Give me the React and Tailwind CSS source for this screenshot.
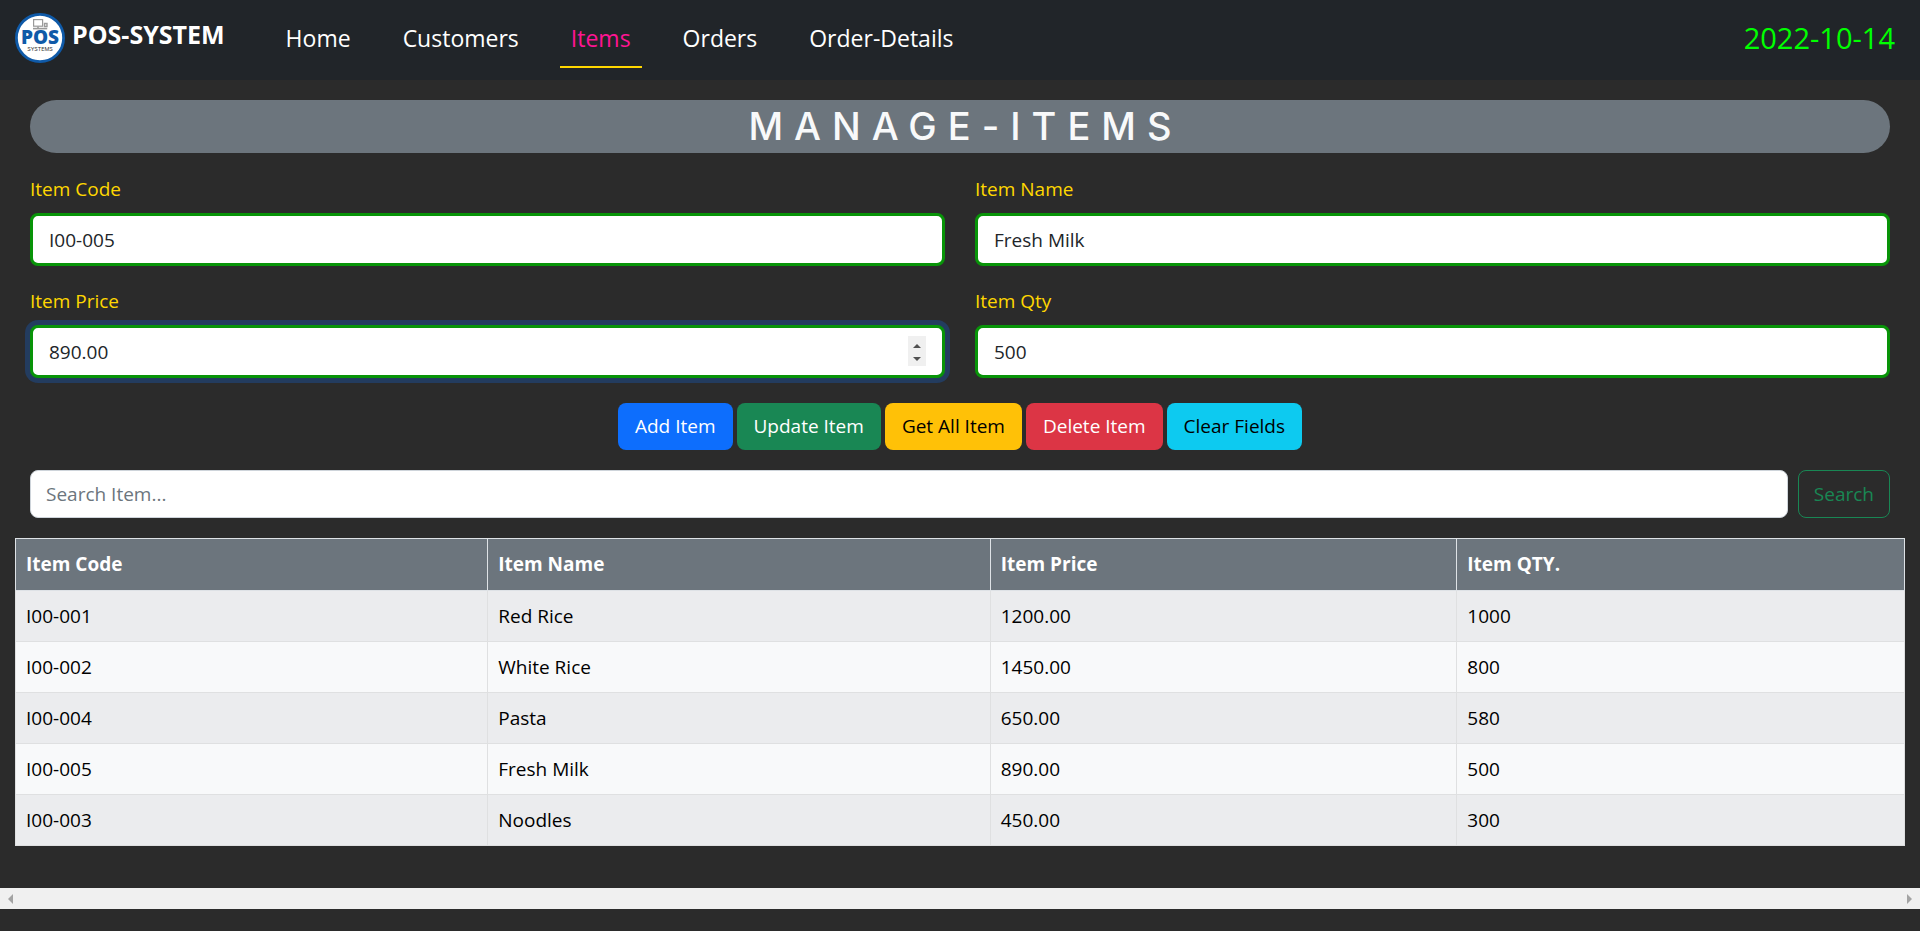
import React, { useState } from "react";

const links = ["Home", "Customers", "Items", "Orders", "Order-Details"];

const rows = [
  ["I00-001", "Red Rice", "1200.00", "1000"],
  ["I00-002", "White Rice", "1450.00", "800"],
  ["I00-004", "Pasta", "650.00", "580"],
  ["I00-005", "Fresh Milk", "890.00", "500"],
  ["I00-003", "Noodles", "450.00", "300"],
];

const actions = [
  ["Add Item", "bg-[#0d6efd] text-white"],
  ["Update Item", "bg-[#198754] text-white"],
  ["Get All Item", "bg-[#ffc107] text-black"],
  ["Delete Item", "bg-[#dc3545] text-white"],
  ["Clear Fields", "bg-[#0dcaf0] text-black"],
];

function Logo() {
  return (
    <svg viewBox="0 0 50 50" className="size-[50px] shrink-0" aria-hidden="true">
      <circle cx="25" cy="25" r="23.6" fill="#fff" stroke="#0f5aa8" strokeWidth="2.8" />
      <g fill="none" stroke="#9a9a9a">
        <rect x="18.6" y="6.6" width="9" height="6.6" strokeWidth="1.2" />
        <path d="M23 13.5v2" strokeWidth="1.6" />
        <path d="M29.5 10.5h2.5v3h-2.5z" strokeWidth="1.4" />
        <path d="M18 15.6h14.2" strokeWidth="1.6" />
      </g>
      <text textAnchor="middle">
        <tspan x="25" y="31.4" fontSize="19" fontWeight="800" fill="#0f5aa8" fontFamily="Open Sans, sans-serif">
          POS
        </tspan>
        <tspan x="25" y="37.6" fontSize="5.4" fill="#333" fontFamily="Inter, sans-serif">
          SYSTEMS
        </tspan>
      </text>
    </svg>
  );
}

function Field({ id, label, value, focused, stepper }) {
  const [current, setCurrent] = useState(value);
  const step = (by) => setCurrent((Number(current) + by).toFixed(2));
  return (
    <div>
      <label htmlFor={id} className="mb-2 block leading-[31px] text-[#ffd700]">
        {label}
      </label>
      <div className="relative">
        <input
          id={id}
          type="text"
          inputMode={stepper ? "decimal" : "text"}
          value={current}
          onChange={(e) => setCurrent(e.target.value)}
          className={
            "block h-[53px] w-full rounded-lg border-3 border-[#089408] bg-white px-4 text-[#212529] outline-none " +
            (focused ? "ring-5 ring-[#0d6efd]/25" : "")
          }
        />
        {stepper && (
          <div className="absolute top-[11px] right-[19px] flex h-[30px] w-[18px] flex-col bg-[#f0f0f0]">
            <button type="button" aria-label="Increase" onClick={() => step(1)} className="flex flex-1 items-center justify-center">
              <svg viewBox="0 0 8 4" className="mt-1 h-1 w-2" aria-hidden="true">
                <path d="M0 4L4 0L8 4z" fill="#505050" />
              </svg>
            </button>
            <button type="button" aria-label="Decrease" onClick={() => step(-1)} className="flex flex-1 items-center justify-center">
              <svg viewBox="0 0 8 4" className="h-1 w-2" aria-hidden="true">
                <path d="M0 0L4 4L8 0z" fill="#505050" />
              </svg>
            </button>
          </div>
        )}
      </div>
    </div>
  );
}

export default function App() {
  return (
    <div className="min-h-screen bg-[#2b2b2b] font-['Open_Sans',sans-serif] text-[19px]">
      <header className="flex h-20 items-center bg-[#212529] pr-[25px] pl-[15px]">
        <a href="#home" className="-mt-1 flex items-center gap-[7px] text-white">
          <Logo />
          <span className="pb-2 text-[25px] leading-9 font-bold">POS-SYSTEM</span>
        </a>
        <nav className="ml-[50px] flex gap-[30px] text-[23px] leading-[38px]">
          {links.map((name) => (
            <a
              key={name}
              href={"#" + name.toLowerCase()}
              className={
                "border-b-2 px-[11px] pt-[7px] pb-[9px] " +
                (name === "Items" ? "border-[#ffd700] text-[#ff1493]" : "border-transparent text-white")
              }
            >
              {name}
            </a>
          ))}
        </nav>
        <time dateTime="2022-10-14" className="ml-auto pb-1 text-[29px] text-[#00ff00]">
          2022-10-14
        </time>
      </header>

      <main className="px-[15px] pt-5">
        <div className="px-[15px]">
          <h1 className="h-[53px] rounded-full bg-[#6c757d] pl-[11px] text-center font-['Inter',sans-serif] text-[38px] leading-[53px] font-medium tracking-[11px] text-[#f8f9fa]">
            MANAGE-ITEMS
          </h1>

          <form className="mt-[21px]" onSubmit={(e) => e.preventDefault()}>
            <div className="grid grid-cols-2 gap-x-[30px] gap-y-5">
              <Field id="item-code" label="Item Code" value="I00-005" />
              <Field id="item-name" label="Item Name" value="Fresh Milk" />
              <Field id="item-price" label="Item Price" value="890.00" focused stepper />
              <Field id="item-qty" label="Item Qty" value="500" />
            </div>
            <div className="mt-[25px] flex justify-center gap-1">
              {actions.map(([name, colors]) => (
                <button key={name} type="button" className={"h-[47px] rounded-lg px-[17px] " + colors}>
                  {name}
                </button>
              ))}
            </div>
          </form>

          <form className="mt-5 flex gap-[10px]" role="search" onSubmit={(e) => e.preventDefault()}>
            <input
              type="search"
              aria-label="Search Item"
              placeholder="Search Item..."
              className="h-12 min-w-0 flex-1 rounded-lg border border-[#ced4da] bg-white px-[15px] text-[#212529] placeholder:text-[#6c757d]"
            />
            <button type="submit" className="h-12 rounded-lg border border-[#198754] px-[15px] text-[#198754]">
              Search
            </button>
          </form>
        </div>

        <table className="mt-5 w-full table-fixed border-collapse text-left text-black">
          <colgroup>
            <col className="w-[25%]" />
            <col className="w-[26.6%]" />
            <col className="w-[24.7%]" />
            <col />
          </colgroup>
          <thead>
            <tr className="h-[52px] bg-[#6c757d] text-white">
              {["Item Code", "Item Name", "Item Price", "Item QTY."].map((name) => (
                <th key={name} scope="col" className="border border-[#dee2e6] px-[10px] font-bold">
                  {name}
                </th>
              ))}
            </tr>
          </thead>
          <tbody>
            {rows.map((row) => (
              <tr key={row[0]} className="h-[51px] bg-[#f8f9fa] odd:bg-[#ebecee]">
                {row.map((cell, i) => (
                  <td key={i} className="border border-[#dfe0e1] px-[10px]">
                    {cell}
                  </td>
                ))}
              </tr>
            ))}
          </tbody>
        </table>
      </main>

      <div className="mt-[42px] flex h-[21px] items-center justify-between bg-[#f0f0f0] px-2">
        <button type="button" aria-label="Scroll left">
          <svg viewBox="0 0 5 10" className="h-[10px] w-[5px]" aria-hidden="true">
            <path d="M5 0L0 5L5 10z" fill="#a3a3a3" />
          </svg>
        </button>
        <button type="button" aria-label="Scroll right">
          <svg viewBox="0 0 5 10" className="h-[10px] w-[5px]" aria-hidden="true">
            <path d="M0 0L5 5L0 10z" fill="#a3a3a3" />
          </svg>
        </button>
      </div>
    </div>
  );
}
